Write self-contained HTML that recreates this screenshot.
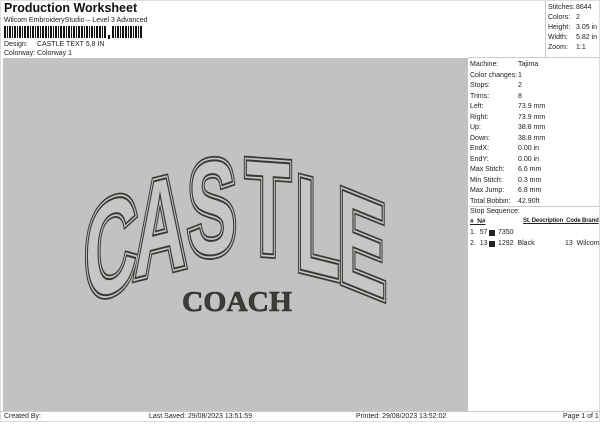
<!DOCTYPE html><html><head><style>
body{margin:0;width:600px;height:424px;background:#fff;font-family:"Liberation Sans",sans-serif;font-size:7px;color:#222;position:relative;overflow:hidden}
.a{position:absolute;white-space:nowrap}
</style></head><body>
<div class="a" style="left:4px;top:1px;font-size:12.5px;font-weight:bold;color:#111">Production Worksheet</div>
<div class="a" style="left:4px;top:17px">Wilcom EmbroideryStudio – Level 3 Advanced</div>
<svg class="a" style="left:4px;top:26px" width="142" height="14">
<g fill="#111">
<rect x="0" y="0" width="2" height="12"/><rect x="3" y="0" width="1" height="12"/><rect x="5" y="0" width="2" height="12"/><rect x="8" y="0" width="1" height="12"/><rect x="10" y="0" width="2" height="12"/><rect x="13" y="0" width="1" height="12"/><rect x="15" y="0" width="2" height="12"/><rect x="18" y="0" width="1" height="12"/><rect x="20" y="0" width="2" height="12"/><rect x="23" y="0" width="2" height="12"/><rect x="26" y="0" width="1" height="12"/><rect x="28" y="0" width="2" height="12"/><rect x="31" y="0" width="1" height="12"/><rect x="33" y="0" width="2" height="12"/><rect x="36" y="0" width="1" height="12"/><rect x="38" y="0" width="2" height="12"/><rect x="41" y="0" width="2" height="12"/><rect x="44" y="0" width="1" height="12"/><rect x="46" y="0" width="2" height="12"/><rect x="49" y="0" width="1" height="12"/><rect x="51" y="0" width="2" height="12"/><rect x="54" y="0" width="1" height="12"/><rect x="56" y="0" width="2" height="12"/><rect x="59" y="0" width="2" height="12"/><rect x="62" y="0" width="1" height="12"/><rect x="64" y="0" width="2" height="12"/><rect x="67" y="0" width="1" height="12"/><rect x="69" y="0" width="2" height="12"/><rect x="72" y="0" width="1" height="12"/><rect x="74" y="0" width="2" height="12"/><rect x="77" y="0" width="2" height="12"/><rect x="80" y="0" width="1" height="12"/><rect x="82" y="0" width="2" height="12"/><rect x="85" y="0" width="1" height="12"/><rect x="87" y="0" width="2" height="12"/><rect x="90" y="0" width="1" height="12"/><rect x="92" y="0" width="2" height="12"/><rect x="95" y="0" width="2" height="12"/><rect x="98" y="0" width="1" height="12"/><rect x="100" y="0" width="2" height="12"/>
<rect x="104" y="9" width="2" height="4"/>
<rect x="108" y="0" width="2" height="12"/><rect x="111" y="0" width="1" height="12"/><rect x="113" y="0" width="2" height="12"/><rect x="116" y="0" width="1" height="12"/><rect x="118" y="0" width="2" height="12"/><rect x="121" y="0" width="2" height="12"/><rect x="124" y="0" width="1" height="12"/><rect x="126" y="0" width="2" height="12"/><rect x="129" y="0" width="1" height="12"/><rect x="131" y="0" width="2" height="12"/><rect x="134" y="0" width="1" height="12"/><rect x="136" y="0" width="2" height="12"/>
</g></svg>
<div class="a" style="left:4px;top:41px">Design:</div><div class="a" style="left:37px;top:41px">CASTLE TEXT 5,8 IN</div>
<div class="a" style="left:4px;top:50px">Colorway:</div><div class="a" style="left:37px;top:50px">Colorway 1</div>
<div class="a" style="left:0;top:0;width:600px;height:422px;border:1px solid #ddd;box-sizing:border-box"></div>
<div class="a" style="left:3px;top:58px;width:465px;height:353px;background:#c2c2c2"></div>
<div class="a" style="left:545px;top:1px;width:1px;height:56px;background:#ccc"></div>
<div class="a" style="left:468px;top:57px;width:131px;height:1px;background:#ccc"></div>
<div class="a" style="left:548px;top:3px;line-height:10px">Stitches:<br>Colors:<br>Height:<br>Width:<br>Zoom:</div>
<div class="a" style="left:576px;top:3px;line-height:10px">8644<br>2<br>3.05 in<br>5.82 in<br>1:1</div>
<div class="a" style="left:470px;top:60px;line-height:10.5px">Machine:<br>Color changes:<br>Stops:<br>Trims:<br>Left:<br>Right:<br>Up:<br>Down:<br>EndX:<br>EndY:<br>Max Stitch:<br>Min Stitch:<br>Max Jump:<br>Total Bobbin:</div>
<div class="a" style="left:518px;top:60px;line-height:10.5px">Tajima<br>1<br>2<br>8<br>73.9 mm<br>73.9 mm<br>38.8 mm<br>38.8 mm<br>0.00 in<br>0.00 in<br>6.6 mm<br>0.3 mm<br>6.8 mm<br>42.90ft</div>
<div class="a" style="left:468px;top:206px;width:131px;height:1px;background:#ccc"></div>
<div class="a" style="left:470px;top:208px">Stop Sequence:</div>
<div class="a" style="left:470px;top:218px;text-decoration:underline;font-weight:bold;font-size:6.5px">#&nbsp;&nbsp;N#</div>
<div class="a" style="left:523px;top:218px;text-decoration:underline;font-weight:bold;font-size:6px;letter-spacing:-0.15px">St.&nbsp;Description&nbsp;&nbsp;Code&nbsp;Brand</div>
<div class="a" style="left:470px;top:229px">1.&nbsp;&nbsp;57</div><div class="a" style="left:489px;top:230px;width:6px;height:6px;background:#222"></div><div class="a" style="left:498px;top:229px">7350</div>
<div class="a" style="left:470px;top:240px">2.&nbsp;&nbsp;13</div><div class="a" style="left:489px;top:241px;width:6px;height:6px;background:#222"></div><div class="a" style="left:498px;top:240px">1292&nbsp;&nbsp;Black</div><div class="a" style="left:565px;top:240px">13&nbsp;&nbsp;Wilcom</div>
<div class="a" style="left:0;top:411px;width:600px;height:1px;background:#ccc"></div>
<div class="a" style="left:4px;top:413px">Created By:</div>
<div class="a" style="left:149px;top:413px">Last Saved: 29/08/2023 13:51:59</div>
<div class="a" style="left:356px;top:413px">Printed: 29/08/2023 13:52:02</div>
<div class="a" style="left:563px;top:413px">Page 1 of 1</div>
<svg class="a" style="left:0;top:0" width="600" height="424">
<defs>
<g id="L" font-family="Liberation Sans,sans-serif" font-weight="bold" font-size="134" text-anchor="middle">
<text transform="translate(111,245) skewY(-22) scale(0.55,1)" y="48">C</text>
<text transform="translate(160,224) skewY(-14) scale(0.55,1)" y="48">A</text>
<text transform="translate(212,206) skewY(-5) scale(0.55,1)" y="48">S</text>
<text transform="translate(268,206) skewY(4) scale(0.55,1)" y="48">T</text>
<text transform="translate(318,226) skewY(14) scale(0.55,1)" y="48">L</text>
<text transform="translate(362,242) skewY(22) scale(0.55,1)" y="48">E</text>
</g>
</defs>
<use href="#L" fill="#3a3833" stroke="#3a3833" stroke-width="9" stroke-linejoin="miter"/>
<use href="#L" fill="#c6c6c6" stroke="#c6c6c6" stroke-width="5.5" stroke-linejoin="miter"/>
<use href="#L" fill="#c6c6c6" stroke="#3a3833" stroke-width="2" stroke-linejoin="miter"/>
<text x="237" y="311" text-anchor="middle" font-family="Liberation Serif,serif" font-weight="bold" font-size="29" fill="#3e3c38" stroke="#2a2925" stroke-width="0.6" textLength="110" lengthAdjust="spacingAndGlyphs">COACH</text>
</svg>
</body></html>
